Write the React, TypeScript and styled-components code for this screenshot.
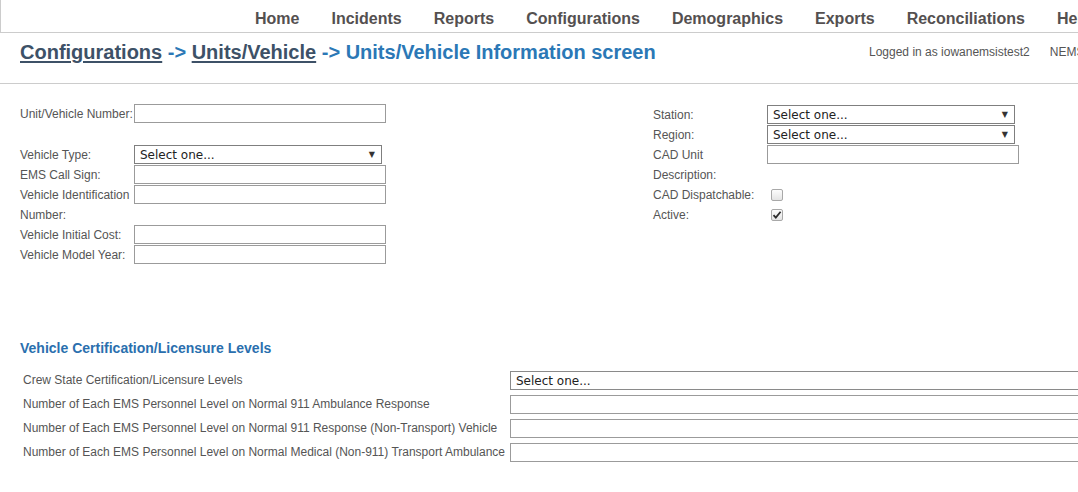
import styled, { createGlobalStyle } from "styled-components";

const GlobalStyle = createGlobalStyle`
  html, body {
    margin: 0;
    padding: 0;
    background: #ffffff;
    overflow: hidden;
  }
  body {
    font-family: "Liberation Sans", Arial, sans-serif;
  }
`;

const navItems = [
  "Home",
  "Incidents",
  "Reports",
  "Configurations",
  "Demographics",
  "Exports",
  "Reconciliations",
  "Help",
];

const leftRows = [
  { label: "Unit/Vehicle Number:", kind: "input" },
  { label: "", kind: "spacer" },
  { label: "Vehicle Type:", kind: "select" },
  { label: "EMS Call Sign:", kind: "input" },
  { label: "Vehicle Identification Number:", kind: "input" },
  { label: "Vehicle Initial Cost:", kind: "input" },
  { label: "Vehicle Model Year:", kind: "input" },
];

const rightRows = [
  { label: "Station:", kind: "select" },
  { label: "Region:", kind: "select" },
  { label: "CAD Unit Description:", kind: "input" },
  { label: "CAD Dispatchable:", kind: "checkbox" },
  { label: "Active:", kind: "checked" },
];

const certRows = [
  { label: "Crew State Certification/Licensure Levels", select: true },
  { label: "Number of Each EMS Personnel Level on Normal 911 Ambulance Response", select: false },
  { label: "Number of Each EMS Personnel Level on Normal 911 Response (Non-Transport) Vehicle", select: false },
  { label: "Number of Each EMS Personnel Level on Normal Medical (Non-911) Transport Ambulance", select: false },
];

const Check = ({ checked }: { checked?: boolean }) => (
  <CheckBox>
    {checked && (
      <svg width="10" height="10" viewBox="0 0 10 10">
        <path d="M1.5 5.2 L3.8 7.6 L8.6 1.8" stroke="#2b2b2b" strokeWidth="1.8" fill="none" />
      </svg>
    )}
  </CheckBox>
);

const Field = ({ kind, width }: { kind: string; width: number }) => {
  if (kind === "select")
    return (
      <SelectBox $width={width}>
        <span>Select one...</span>
        <Arrow>▼</Arrow>
      </SelectBox>
    );
  if (kind === "checkbox") return <Check />;
  if (kind === "checked") return <Check checked />;
  if (kind === "spacer") return <span />;
  return <TextInput $width={width} />;
};

const App = () => {
  return (
    <Page>
      <GlobalStyle />
      <TopNav>
        {navItems.map((n) => (
          <NavItem key={n}>{n}</NavItem>
        ))}
      </TopNav>
      <Header>
        <Title>
          <Crumb>Configurations</Crumb> -&gt; <Crumb>Units/Vehicle</Crumb> -&gt; Units/Vehicle
          Information screen
        </Title>
        <UserInfo>
          <span>Logged in as iowanemsistest2</span>
          <span>NEMSIS 3.4</span>
        </UserInfo>
      </Header>

      <FormArea>
        <FormColumn>
          {leftRows.map((r, i) => (
            <FormRow key={i} $spacer={r.kind === "spacer"}>
              <Label>{r.label}</Label>
              <Field kind={r.kind} width={r.kind === "select" ? 248 : 252} />
            </FormRow>
          ))}
        </FormColumn>
        <FormColumn $offset={1}>
          {rightRows.map((r, i) => (
            <FormRow key={i}>
              <Label>{r.label}</Label>
              <Field kind={r.kind} width={r.kind === "select" ? 248 : 252} />
            </FormRow>
          ))}
        </FormColumn>
      </FormArea>

      <Section>
        <SectionTitle>Vehicle Certification/Licensure Levels</SectionTitle>
        <CertTable>
          {certRows.map((r) => (
            <CertRow key={r.label}>
              <CertLabel>{r.label}</CertLabel>
              {r.select ? (
                <WideSelect>Select one...</WideSelect>
              ) : (
                <TextInput $width={640} />
              )}
            </CertRow>
          ))}
        </CertTable>
      </Section>
    </Page>
  );
};

const Page = styled.div`
  width: 1180px;
  min-height: 492px;
`;

const TopNav = styled.nav`
  display: flex;
  align-items: center;
  gap: 32px;
  height: 33px;
  padding: 5px 0 0 254px;
  box-sizing: border-box;
  border-left: 1px solid #cccccc;
  border-bottom: 1px solid #cccccc;
`;

const NavItem = styled.a`
  font-family: "Liberation Sans", Arial, sans-serif;
  font-weight: 700;
  font-size: 16px;
  color: #545050;
  white-space: nowrap;
  cursor: pointer;
`;

const Header = styled.div`
  display: flex;
  align-items: center;
  height: 51px;
  padding: 0 0 12px 20px;
  box-sizing: border-box;
  border-bottom: 1px solid #cccccc;
`;

const Title = styled.h1`
  flex: 0 0 849px;
  margin: 0;
  font-family: "Liberation Sans", Arial, sans-serif;
  font-weight: 700;
  font-size: 20px;
  line-height: 24px;
  color: #2b78b6;
  white-space: nowrap;
`;

const Crumb = styled.a`
  color: #3d5167;
  text-decoration: underline;
  text-underline-offset: 2px;
  cursor: pointer;
`;

const UserInfo = styled.div`
  display: flex;
  gap: 20px;
  font-size: 12px;
  color: #555555;
  white-space: nowrap;
`;

const FormArea = styled.div`
  display: grid;
  grid-template-columns: 633px auto;
  padding: 20px 0 0 20px;
`;

const FormColumn = styled.div<{ $offset?: number }>`
  display: flex;
  flex-direction: column;
  margin-top: ${(p) => p.$offset ?? 0}px;
`;

const FormRow = styled.div<{ $spacer?: boolean }>`
  display: grid;
  grid-template-columns: 114px auto;
  align-items: start;
  min-height: ${(p) => (p.$spacer ? 21 : 20)}px;
`;

const Label = styled.span`
  font-size: 12px;
  line-height: 20px;
  color: #555555;
`;

const TextInput = styled.input.attrs({ type: "text" })<{ $width: number }>`
  width: ${(p) => p.$width}px;
  height: 19px;
  box-sizing: border-box;
  margin: 0;
  padding: 0 4px;
  border: 1px solid #9b9b9b;
  background: #ffffff;
  outline: none;
`;

const SelectBox = styled.div<{ $width: number }>`
  width: ${(p) => p.$width}px;
  height: 19px;
  box-sizing: border-box;
  display: flex;
  align-items: center;
  justify-content: space-between;
  padding: 0 6px 0 5px;
  border: 1px solid #7f7f7f;
  font-family: "DejaVu Sans", Verdana, sans-serif;
  font-size: 12px;
  color: #222222;
  background: #ffffff;
`;

const Arrow = styled.span`
  font-size: 8px;
  color: #333333;
`;

const CheckBox = styled.span`
  width: 12px;
  height: 12px;
  margin: 4px 0 0 4px;
  box-sizing: border-box;
  display: flex;
  align-items: center;
  justify-content: center;
  border: 1px solid #a8a8a8;
  border-radius: 2px;
  background: linear-gradient(#fcfcfc, #e4e4e4);
`;

const Section = styled.div`
  margin-top: 74px;
  padding-left: 20px;
`;

const SectionTitle = styled.h2`
  margin: 0;
  font-family: "Liberation Sans", Arial, sans-serif;
  font-weight: 700;
  font-size: 14px;
  line-height: 18px;
  color: #2a6fae;
`;

const CertTable = styled.div`
  display: flex;
  flex-direction: column;
  gap: 5px;
  margin-top: 14px;
  padding-left: 3px;
`;

const CertRow = styled.div`
  display: grid;
  grid-template-columns: 487px auto;
  align-items: center;
`;

const CertLabel = styled.span`
  font-size: 12px;
  line-height: 19px;
  color: #555555;
  white-space: nowrap;
`;

const WideSelect = styled.div`
  width: 640px;
  height: 19px;
  box-sizing: border-box;
  display: flex;
  align-items: center;
  padding-left: 5px;
  border: 1px solid #8a8a8a;
  font-family: "DejaVu Sans", Verdana, sans-serif;
  font-size: 12px;
  color: #222222;
`;

export default App;
